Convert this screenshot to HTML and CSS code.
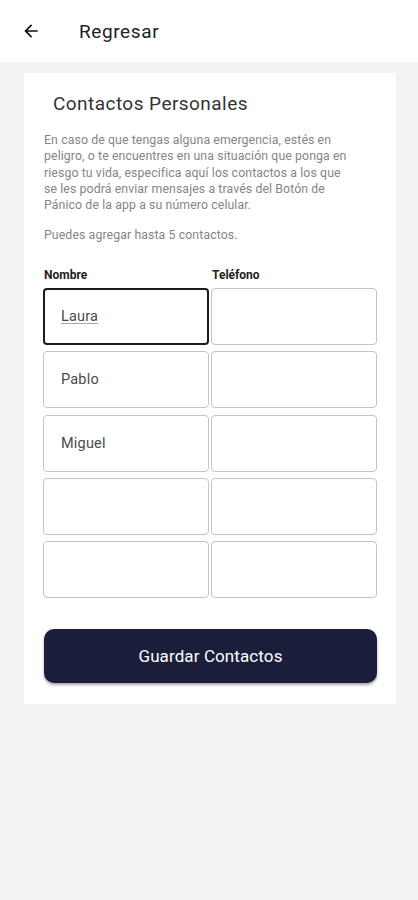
FILE: index.html
```html
<!DOCTYPE html>
<html lang="es">
<head>
<meta charset="utf-8">
<title>Contactos Personales</title>
<link rel="stylesheet" href="styles.css">
</head>
<body>
<header class="topbar">
  <svg class="back" width="20" height="20" viewBox="0 0 24 24" aria-hidden="true"><path d="M20 11H7.83l5.59-5.59L12 4l-8 8 8 8 1.41-1.41L7.83 13H20v-2z" fill="#111"/></svg>
  <span class="topbar-title">Regresar</span>
</header>
<main class="content">
  <section class="card">
    <h1 class="card-title">Contactos Personales</h1>
    <p class="desc">En caso de que tengas alguna emergencia, estés en<br>peligro, o te encuentres en una situación que ponga en<br>riesgo tu vida, especifica aquí los contactos a los que<br>se les podrá enviar mensajes a través del Botón de<br>Pánico de la app a su número celular.</p>
    <p class="desc">Puedes agregar hasta 5 contactos.</p>
    <div class="grid">
      <div class="label">Nombre</div>
      <div class="label">Teléfono</div>
      <div class="field active"><span class="composing">Laura</span></div>
      <div class="field"></div>
      <div class="field">Pablo</div>
      <div class="field"></div>
      <div class="field">Miguel</div>
      <div class="field"></div>
      <div class="field"></div>
      <div class="field"></div>
      <div class="field"></div>
      <div class="field"></div>
    </div>
    <button class="save">Guardar Contactos</button>
  </section>
</main>
</body>
</html>
```
FILE: styles.css
```css
* { box-sizing: border-box; }
html, body { margin: 0; padding: 0; }
body {
  background: #f3f3f3;
  font-family: Roboto, "Noto Sans", sans-serif;
  width: 418px;
  min-height: 900px;
}
.topbar {
  height: 62px;
  background: #fff;
  display: flex;
  align-items: center;
  padding-left: 21px;
}
.back { flex: none; }
.topbar-title {
  margin-left: 38px;
  font-size: 19px;
  color: #222;
  letter-spacing: 0.6px;
}
.content {
  padding: 11px 22px 0 24px;
}
.card {
  background: #fff;
  padding: 19px 19px 19px 19px;
  height: 631px;
}
.card-title {
  margin: 0 0 16px 10px;
  font-size: 19px;
  font-weight: 400;
  color: #333;
  line-height: 24px;
  letter-spacing: 0.45px;
}
.desc {
  margin: 0 0 14px 1px;
  font-size: 12.3px;
  line-height: 16.3px;
  color: #858585;
  letter-spacing: 0.1px;
  white-space: nowrap;
}
.grid {
  display: grid;
  grid-template-columns: 166px 166px;
  column-gap: 2px;
  row-gap: 6.3px;
  margin-top: 24px;
}
.label {
  font-size: 12px;
  font-weight: 700;
  color: #222;
  line-height: 14px;
  margin-bottom: 0;
  padding-left: 1px;
}
.field {
  height: 57px;
  border: 1.5px solid #c4c4c4;
  border-radius: 4px;
  display: flex;
  align-items: center;
  padding-left: 17px;
  font-size: 14.5px;
  color: #4a4a4a;
  letter-spacing: 0.2px;
}
.field.active {
  border: 2px solid #1c1c1c;
  padding-left: 16px;
}
.composing {
  text-decoration: underline;
  text-decoration-color: #aaa;
  text-underline-offset: 2px;
}
.save {
  display: block;
  width: 333px;
  height: 54px;
  margin: 31px 0 0 1px;
  background: #1b1e3b;
  color: #fff;
  border: none;
  border-radius: 10px;
  font-family: Roboto, "Noto Sans", sans-serif;
  font-size: 17px;
  font-weight: 400;
  letter-spacing: 0.1px;
  box-shadow: 0 2px 3px rgba(0,0,0,0.35);
}
```
